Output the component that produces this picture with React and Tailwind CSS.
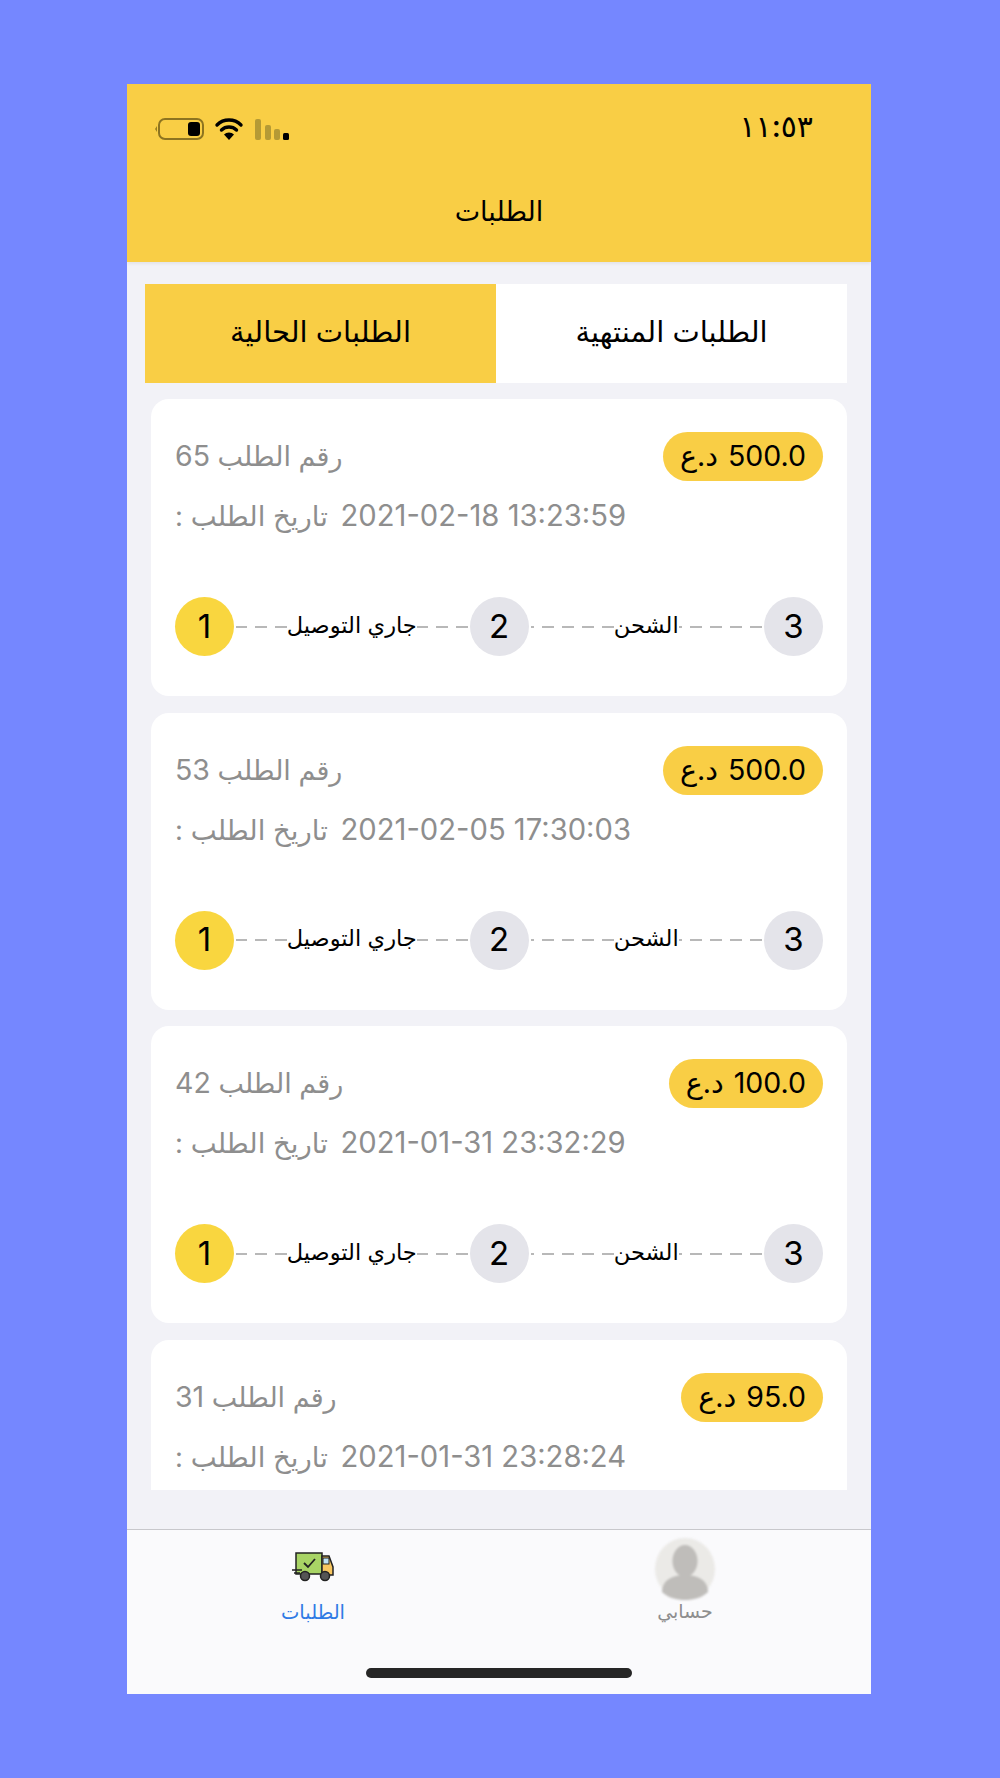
import React from 'react';

const orders = [
  { id: 65, price: '500.0', date: '13:23:59 2021-02-18' },
  { id: 53, price: '500.0', date: '17:30:03 2021-02-05' },
  { id: 42, price: '100.0', date: '23:32:29 2021-01-31' },
  { id: 31, price: '95.0', date: '23:28:24 2021-01-31', clipped: true },
];

const StatusIcons = () => (
  <svg width="134" height="24" viewBox="0 0 134 24" fill="none" dir="ltr">
    {/* battery */}
    <path d="M2 9 L0 12 L2 15 Z" fill="#9a7f20" />
    <rect x="4" y="2" width="44" height="20" rx="6" stroke="#8d7420" strokeWidth="2" />
    <rect x="33" y="5" width="12" height="14" rx="3" fill="#000" />
    {/* wifi */}
    <path d="M62 8 a17 17 0 0 1 24 0" stroke="#000" strokeWidth="3.4" strokeLinecap="round" />
    <path d="M66.500 13 a11 11 0 0 1 15 0" stroke="#000" strokeWidth="3.4" strokeLinecap="round" />
    <path d="M74 23 L69 17.500 a7 7 0 0 1 10 0 Z" fill="#000" />
    {/* signal */}
    <rect x="100" y="2" width="6" height="21" rx="2" fill="#b59a35" />
    <rect x="110" y="8" width="6" height="15" rx="2" fill="#b59a35" />
    <rect x="119" y="12" width="6" height="11" rx="2" fill="#b59a35" />
    <rect x="128" y="16" width="6" height="7" rx="1.500" fill="#000" />
  </svg>
);

const TruckIcon = () => (
  <svg width="42" height="30" viewBox="0 0 42 30" fill="none" dir="ltr">
    <rect x="4" y="1" width="26" height="21" fill="#a8d465" stroke="#222" strokeWidth="1.500" />
    <path d="M30 4 H37 L41 15 V23 H30 Z" fill="#f7c661" stroke="#222" strokeWidth="1.500" />
    <rect x="31" y="6" width="6" height="6" fill="#bfe3f5" stroke="#222" strokeWidth="1" />
    <path d="M12 11 L16 15 L23 7" stroke="#222" strokeWidth="1.800" />
    <path d="M0 18 H10 M2 21 H8" stroke="#222" strokeWidth="1.300" />
    <circle cx="13" cy="24" r="4.500" fill="#555" stroke="#222" strokeWidth="1.500" />
    <circle cx="33" cy="24" r="4.500" fill="#555" stroke="#222" strokeWidth="1.500" />
  </svg>
);

const Avatar = () => (
  <svg width="60" height="62" viewBox="0 0 60 62" className="blur-[1px]">
    <ellipse cx="30" cy="31" rx="30" ry="31" fill="#ebeae7" />
    <ellipse cx="30" cy="23" rx="12.500" ry="16" fill="#bfbdba" />
    <path d="M7 54 C7 42 18 37 30 37 C42 37 53 42 53 54 C47 60 38 62 30 62 C22 62 13 60 7 54 Z" fill="#bfbdba" />
  </svg>
);

const Dashes = () => (
  <div className="h-[2px] flex-1 bg-[repeating-linear-gradient(to_left,#b8b8b8_0,#b8b8b8_12px,transparent_12px,transparent_20px)]" />
);

const Step = ({ n, active }) => (
  <div className={`flex h-[59px] w-[59px] shrink-0 items-center justify-center rounded-full text-[33px] font-normal text-black ${active ? 'bg-[#f9d63f]' : 'bg-[#e4e4ea]'}`}>
    {n}
  </div>
);

const Connector = ({ label }) => (
  <div className="flex flex-1 items-center px-[2px]">
    <Dashes />
    <span className="-mt-[4px] text-[22.5px] leading-6 text-black">{label}</span>
    <Dashes />
  </div>
);

const OrderCard = ({ order }) => (
  <div className="h-[297px] shrink-0 rounded-[18px] bg-white px-[24px] pt-[33px]">
    <div className="flex h-[49px] items-center justify-between">
      <div className="flex h-[49px] items-center rounded-full bg-[#f9ce45] pl-[17px] pr-[17px] text-[28.5px] font-normal text-black [word-spacing:2px]">
        {order.price} د.ع
      </div>
      <div className="text-[27px] font-normal text-[#8e8e8e]">رقم الطلب <span className="text-[28.5px]">{order.id}</span></div>
    </div>
    <div className="mt-[15px] h-[40px] text-left text-[27.5px] font-normal leading-[40px] text-[#8e8e8e]">
      <span className="ml-[5px] text-[29.2px]">{order.date}</span> تاريخ الطلب :
    </div>
    {!order.clipped && (
      <div className="mt-[61px] flex items-center">
        <Step n={3} />
        <Connector label="الشحن" />
        <Step n={2} />
        <Connector label="جاري التوصيل" />
        <Step n={1} active />
      </div>
    )}
  </div>
);

export default function App() {
  return (
    <div dir="rtl" className="h-[1778px] bg-[#7587ff] pl-[127px] pr-[129px] pt-[84px] font-['Inter','DejaVu_Sans',sans-serif]">
      <div className="flex h-[1610px] flex-col overflow-hidden bg-[#f2f2f7]">
        <header className="h-[178px] shrink-0 bg-[#f9ce45] shadow-[0_2px_3px_rgba(0,0,0,0.06)]">
          <div className="flex h-[90px] items-center justify-between pl-[28px] pr-[58px]">
            <span className="-mt-[6px] text-[30px] font-medium leading-[36px] text-black">١١:٥٣</span>
            <StatusIcons />
          </div>
          <h1 className="mt-[18px] text-center text-[27px] font-normal leading-[40px] text-black">الطلبات</h1>
        </header>

        <div className="ml-[18px] mr-[24px] mt-[22px] flex h-[99px] shrink-0 text-[29px] text-black">
          <div className="flex flex-1 items-center justify-center bg-white pb-[4px]">الطلبات المنتهية</div>
          <div className="flex flex-1 items-center justify-center bg-[#f9ce45] pb-[4px]">الطلبات الحالية</div>
        </div>

        <div className="mx-[24px] mt-[16px] flex h-[1091px] shrink-0 flex-col gap-[16.6px] overflow-hidden">
          {orders.map((order) => (
            <OrderCard key={order.id} order={order} />
          ))}
        </div>

        <div className="mt-[39px] flex-1 border-t border-[#c8c8cc] bg-[#fafafc]">
          <div className="grid grid-cols-2">
            <div className="flex flex-col items-center">
              <div className="flex h-[70px] items-center pt-[7px]">
                <Avatar />
              </div>
              <span className="text-[19px] leading-6 text-[#8e8e8e]">حسابي</span>
            </div>
            <div className="flex flex-col items-center">
              <div className="flex h-[70px] items-center pt-[3px]">
                <TruckIcon />
              </div>
              <span className="text-[19.5px] leading-6 text-[#2f7ae5]">الطلبات</span>
            </div>
          </div>
          <div className="mx-auto mt-[44px] h-[10px] w-[266px] rounded-full bg-[#262626]" />
        </div>
      </div>
    </div>
  );
}
